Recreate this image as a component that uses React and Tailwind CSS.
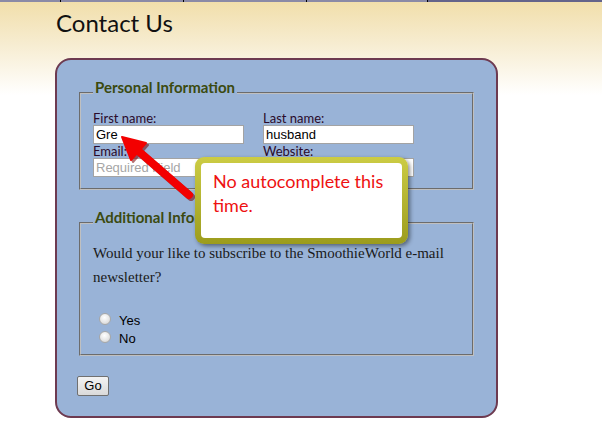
import React from 'react';

const sans = "font-['Lato','Noto_Sans',sans-serif]";

function Field({ label, value, placeholder }) {
  return (
    <div className="flex flex-col">
      <label className="block text-[13px] leading-[14px] text-[#2a0a2a]">{label}</label>
      <input
        readOnly
        value={value}
        placeholder={placeholder}
        className="h-[19px] w-[151px] border border-[#a3a3a3] bg-white px-[2px] font-['Liberation_Sans',Arial,sans-serif] text-[13px] text-black outline-none placeholder:text-[#a6a6a6]"
      />
    </div>
  );
}

function Radio({ label }) {
  return (
    <div className="flex h-[18px] items-start">
      <input
        type="radio"
        name="newsletter"
        className="ml-[6px] mt-[4px] h-[12px] w-[12px] appearance-none rounded-full border border-[#a8a8a8] bg-[radial-gradient(circle_at_45%_35%,#ffffff_0%,#e6e6e6_55%,#cfcfcf_100%)]"
      />
      <span className="ml-[8px] mt-[3px] font-['Liberation_Sans',Arial,sans-serif] text-[13px] leading-[18px] text-black">
        {label}
      </span>
    </div>
  );
}

export default function App() {
  return (
    <div className={`relative min-h-[435px] w-full bg-[linear-gradient(to_bottom,#f1dea9_0px,#f6ebcd_40px,#ffffff_95px)] ${sans}`}>
      {/* top nav strip */}
      <div className="flex h-[2px]">
        <div className="w-[60px] bg-[#8b8aa6]" />
        <div className="w-px bg-black" />
        <div className="w-[122px] bg-[#8b8aa6]" />
        <div className="w-px bg-black" />
        <div className="w-[122px] bg-[#8b8aa6]" />
        <div className="w-px bg-black" />
        <div className="w-[120px] bg-[#8b8aa6]" />
        <div className="w-px bg-black" />
        <div className="flex-1 bg-[#64648a]" />
      </div>

      <h1 className="ml-[56px] mt-[7px] text-[24px] leading-[28px] text-[#111]">Contact Us</h1>

      <form className="ml-[55px] mt-[21px] box-border h-[360px] w-[443px] rounded-[16px] border-2 border-[#6d3a50] bg-[#99b3d7] px-[22px] pt-[18px]">
        <fieldset className="border-2 border-[#c0c0c0] pb-[11px] pl-[12px] pt-[3px] [border-style:groove]">
          <legend className="px-[2px] pb-[12px] text-[15px] font-bold leading-[18px] text-[#3b4a10]">
            Personal Information
          </legend>
          <div className="grid grid-cols-[151px_151px] gap-x-[19px]">
            <Field label="First name:" value="Gre" />
            <Field label="Last name:" value="husband" />
            <Field label="Email:" value="" placeholder="Required Field" />
            <Field label="Website:" value="" />
          </div>
        </fieldset>

        <fieldset className="mt-[18px] border-2 border-[#c0c0c0] pb-[9px] pl-[12px] pt-[3px] [border-style:groove]">
          <legend className="px-[2px] pb-[12px] text-[15px] font-bold leading-[18px] text-[#3b4a10]">
            Additional Information
          </legend>
          <p className="font-['Liberation_Serif',Georgia,serif] text-[15px] leading-[24px] text-[#1a1a1a]">
            Would your like to subscribe to the SmoothieWorld e-mail newsletter?
          </p>
          <div className="mt-[20px] flex flex-col">
            <Radio label="Yes" />
            <Radio label="No" />
          </div>
        </fieldset>

        <button
          type="button"
          className="-ml-[2px] mt-[20px] h-[20px] w-[32px] rounded-[2px] border border-[#707070] bg-gradient-to-b from-[#f3f3f3] to-[#dadada] font-['Liberation_Sans',Arial,sans-serif] text-[13px] leading-[18px] text-black"
        >
          Go
        </button>
      </form>

      {/* red arrow annotation */}
      <svg className="pointer-events-none absolute left-[110px] top-[125px]" width="95" height="85" viewBox="110 125 95 85">
        <g transform="translate(2,2)" fill="#7a0000" stroke="#7a0000" opacity="0.55">
          <line x1="189" y1="195" x2="136" y2="149" strokeWidth="8" strokeLinecap="round" />
          <polygon points="122,137 146,143 131,160" strokeWidth="2" strokeLinejoin="round" />
        </g>
        <g fill="#f30000" stroke="#f30000">
          <line x1="189" y1="195" x2="136" y2="149" strokeWidth="8" strokeLinecap="round" />
          <polygon points="122,137 146,143 131,160" strokeWidth="2" strokeLinejoin="round" />
        </g>
      </svg>

      {/* callout */}
      <div className="absolute left-[195px] top-[157px] w-[213px] rounded-[9px] bg-gradient-to-b from-[#cccc44] to-[#9c9c1c] p-[6px] shadow-[2px_2px_4px_rgba(0,0,0,0.45)]">
        <div className="h-[75px] rounded-[4px] bg-white pl-[12px] pt-[6px] text-[18px] leading-[24px] text-[#ee1111]">
          No autocomplete this time.
        </div>
      </div>
    </div>
  );
}
